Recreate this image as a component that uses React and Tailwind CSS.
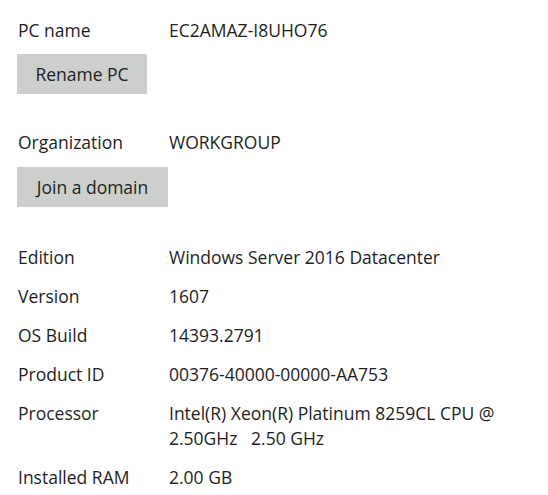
export default function App() {
  const rows = [
    ["Edition", ["Windows Server 2016 Datacenter"]],
    ["Version", ["1607"]],
    ["OS Build", ["14393.2791"]],
    ["Product ID", ["00376-40000-00000-AA753"]],
    ["Processor", ["Intel(R) Xeon(R) Platinum 8259CL CPU @", "2.50GHz   2.50 GHz"]],
    ["Installed RAM", ["2.00 GB"]],
  ];
  return (
    <div
      className="w-[548px] h-[495px] bg-white text-[#1e1e1e] text-[17.5px] leading-[20px] pl-[18px] pt-[20px] overflow-hidden"
      style={{ fontFamily: '"Open Sans", "Noto Sans", sans-serif' }}
    >
      <div className="flex h-[20px]">
        <div className="w-[151px]">PC name</div>
        <div>EC2AMAZ-I8UHO76</div>
      </div>
      <div className="mt-[14px] -ml-[1px]">
        <button className="h-[40px] w-[130px] bg-[#cccfcc] text-[#1e1e1e]">Rename PC</button>
      </div>
      <div className="flex h-[20px] mt-[38px]">
        <div className="w-[151px]">Organization</div>
        <div>WORKGROUP</div>
      </div>
      <div className="mt-[15px] -ml-[1px]">
        <button className="h-[40px] w-[151px] bg-[#cccfcc] text-[#1e1e1e]">Join a domain</button>
      </div>
      <div className="mt-[40px] flex flex-col gap-[19px]">
        {rows.map(([k, v]) => (
          <div key={k} className="flex">
            <div className="w-[151px] shrink-0">{k}</div>
            <div className="flex flex-col gap-[5px]">
              {v.map((line, i) => (
                <div key={i} className="whitespace-pre">{line}</div>
              ))}
            </div>
          </div>
        ))}
      </div>
    </div>
  );
}
